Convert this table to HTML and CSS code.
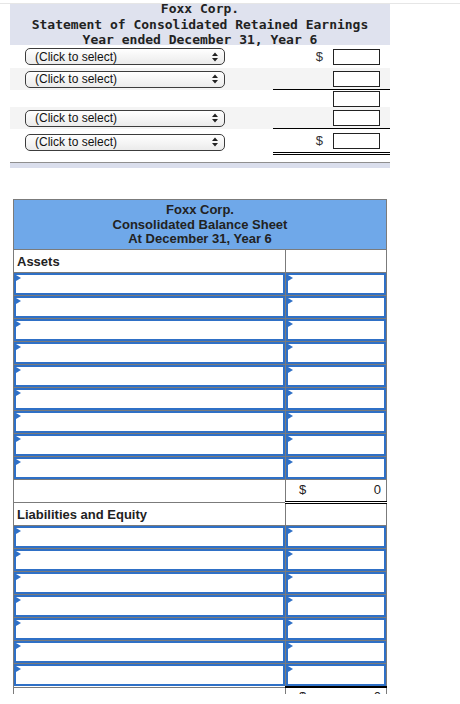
FILE: index.html
```html
<!DOCTYPE html>
<html>
<head>
<meta charset="utf-8">
<link rel="stylesheet" href="styles.css">
</head>
<body>
<div class="viewport">
  <div class="content">
    <section class="stmt">
      <div class="stmt-head">Foxx Corp.<br>Statement of Consolidated Retained Earnings<br>Year ended December 31, Year 6</div>
      <div class="srow r-a">
        <div class="sel"><span>(Click to select)</span><svg class="arr" width="6" height="10" viewBox="0 0 6 10"><path d="M0 4 L3 0.5 L6 4 Z M0 6 L3 9.5 L6 6 Z"/></svg></div>
        <div class="amt"><span class="dol">$</span><span class="box"></span></div>
      </div>
      <div class="srow r-b alt">
        <div class="sel"><span>(Click to select)</span><svg class="arr" width="6" height="10" viewBox="0 0 6 10"><path d="M0 4 L3 0.5 L6 4 Z M0 6 L3 9.5 L6 6 Z"/></svg></div>
        <div class="amt line"><span class="box"></span></div>
      </div>
      <div class="srow r-c">
        <div class="amt"><span class="box"></span></div>
      </div>
      <div class="srow r-b alt">
        <div class="sel"><span>(Click to select)</span><svg class="arr" width="6" height="10" viewBox="0 0 6 10"><path d="M0 4 L3 0.5 L6 4 Z M0 6 L3 9.5 L6 6 Z"/></svg></div>
        <div class="amt line"><span class="box"></span></div>
      </div>
      <div class="srow r-d">
        <div class="sel"><span>(Click to select)</span><svg class="arr" width="6" height="10" viewBox="0 0 6 10"><path d="M0 4 L3 0.5 L6 4 Z M0 6 L3 9.5 L6 6 Z"/></svg></div>
        <div class="amt dbl"><span class="dol">$</span><span class="box"></span></div>
      </div>
      <div class="band2"></div>
    </section>

    <table class="bs">
      <colgroup><col class="c1"><col class="c2"></colgroup>
      <tr><th class="head" colspan="2">Foxx Corp.<br>Consolidated Balance Sheet<br>At December 31, Year 6</th></tr>
      <tr><td class="lbl">Assets</td><td></td></tr>
      <tr><td class="in"><div class="inp"></div></td><td class="in"><div class="inp"></div></td></tr>
      <tr><td class="in"><div class="inp"></div></td><td class="in"><div class="inp"></div></td></tr>
      <tr><td class="in"><div class="inp"></div></td><td class="in"><div class="inp"></div></td></tr>
      <tr><td class="in"><div class="inp"></div></td><td class="in"><div class="inp"></div></td></tr>
      <tr><td class="in"><div class="inp"></div></td><td class="in"><div class="inp"></div></td></tr>
      <tr><td class="in"><div class="inp"></div></td><td class="in"><div class="inp"></div></td></tr>
      <tr><td class="in"><div class="inp"></div></td><td class="in"><div class="inp"></div></td></tr>
      <tr><td class="in"><div class="inp"></div></td><td class="in"><div class="inp"></div></td></tr>
      <tr><td class="in"><div class="inp"></div></td><td class="in"><div class="inp"></div></td></tr>
      <tr><td></td><td class="tot"><div class="totv"><span>$</span><span>0</span></div></td></tr>
      <tr><td class="lbl">Liabilities and Equity</td><td></td></tr>
      <tr><td class="in"><div class="inp"></div></td><td class="in"><div class="inp"></div></td></tr>
      <tr><td class="in"><div class="inp"></div></td><td class="in"><div class="inp"></div></td></tr>
      <tr><td class="in"><div class="inp"></div></td><td class="in"><div class="inp"></div></td></tr>
      <tr><td class="in"><div class="inp"></div></td><td class="in"><div class="inp"></div></td></tr>
      <tr><td class="in"><div class="inp"></div></td><td class="in"><div class="inp"></div></td></tr>
      <tr><td class="in"><div class="inp"></div></td><td class="in"><div class="inp"></div></td></tr>
      <tr><td class="in"><div class="inp"></div></td><td class="in"><div class="inp"></div></td></tr>
      <tr><td></td><td class="tot top"><div class="totv"><span>$</span><span>0</span></div></td></tr>
    </table>
  </div>
</div>
</body>
</html>
```
FILE: styles.css
```css
* { box-sizing: border-box; }

body {
  margin: 0;
  background: #fff;
  font-family: "Liberation Sans", Arial, sans-serif;
  color: #222;
}

.viewport {
  margin-top: 3px;
  border-top: 1px solid #e6e6e6;
  height: 691px;
  overflow: hidden;
}

.content {
  margin-top: -3px;
}

.stmt {
  margin-left: 10px;
  width: 380px;
}

.stmt-head {
  height: 44px;
  background: #dfe2ee;
  font: bold 13px/15.5px "DejaVu Sans Mono", monospace;
  text-align: center;
  color: #222;
}

.srow {
  display: flex;
  align-items: center;
  padding-left: 15px;
}
.srow.alt { background: #f4f4f4; }
.r-a { height: 23px; }
.r-b { height: 22px; }
.r-c { height: 17px; }
.r-d { height: 26px; }

.sel {
  width: 200px;
  height: 17px;
  border: 1px solid #3c3c3c;
  border-radius: 5px;
  background: linear-gradient(#ffffff, #ebebeb);
  display: flex;
  align-items: center;
  justify-content: space-between;
  padding: 0 6px 0 9px;
  font-size: 12px;
  color: #111;
}
.arr { fill: #222; }

.amt {
  margin-left: auto;
  width: 117px;
  align-self: stretch;
  display: flex;
  align-items: center;
  justify-content: flex-end;
  gap: 10px;
  padding-right: 10px;
}
.amt.line { border-bottom: 1px solid #000; }
.amt.dbl { border-bottom: 3px double #000; }

.dol {
  font-size: 13px;
  color: #333;
}

.box {
  width: 47px;
  height: 16px;
  border: 1px solid #222;
  background: #fff;
}

.band2 {
  margin-top: 7px;
  height: 6px;
  border-top: 1px solid #8f8f8f;
  background: #dadeec;
}

.bs {
  margin: 31px 0 0 13px;
  width: 373px;
  border-collapse: collapse;
  table-layout: fixed;
}
.c1 { width: 272px; }
.c2 { width: 101px; }

.bs td, .bs th {
  border: 1px solid #7b7b7b;
  padding: 0;
  height: 23px;
}

.bs th.head {
  background: #6fa8e9;
  font-size: 13px;
  line-height: 14.7px;
  font-weight: bold;
  text-align: center;
  padding: 3px 0 2px;
  color: #222;
}

.bs td.lbl {
  font-size: 13px;
  font-weight: bold;
  padding-left: 3px;
  vertical-align: middle;
}

.inp {
  position: relative;
  height: 22px;
  border: 2px solid #2f70c6;
  background: #fff;
}
.inp::before {
  content: "";
  position: absolute;
  left: 0;
  top: 0;
  border-left: 5px solid #2f70c6;
  border-top: 3.5px solid transparent;
  border-bottom: 3.5px solid transparent;
}

.bs td.tot {
  border-bottom: 3px double #000;
  padding-bottom: 3px;
}
.bs td.tot.top { border-top: 2px solid #000; }

.totv {
  display: flex;
  justify-content: space-between;
  padding: 0 5px 0 13px;
  font-size: 13px;
  color: #222;
}
```
